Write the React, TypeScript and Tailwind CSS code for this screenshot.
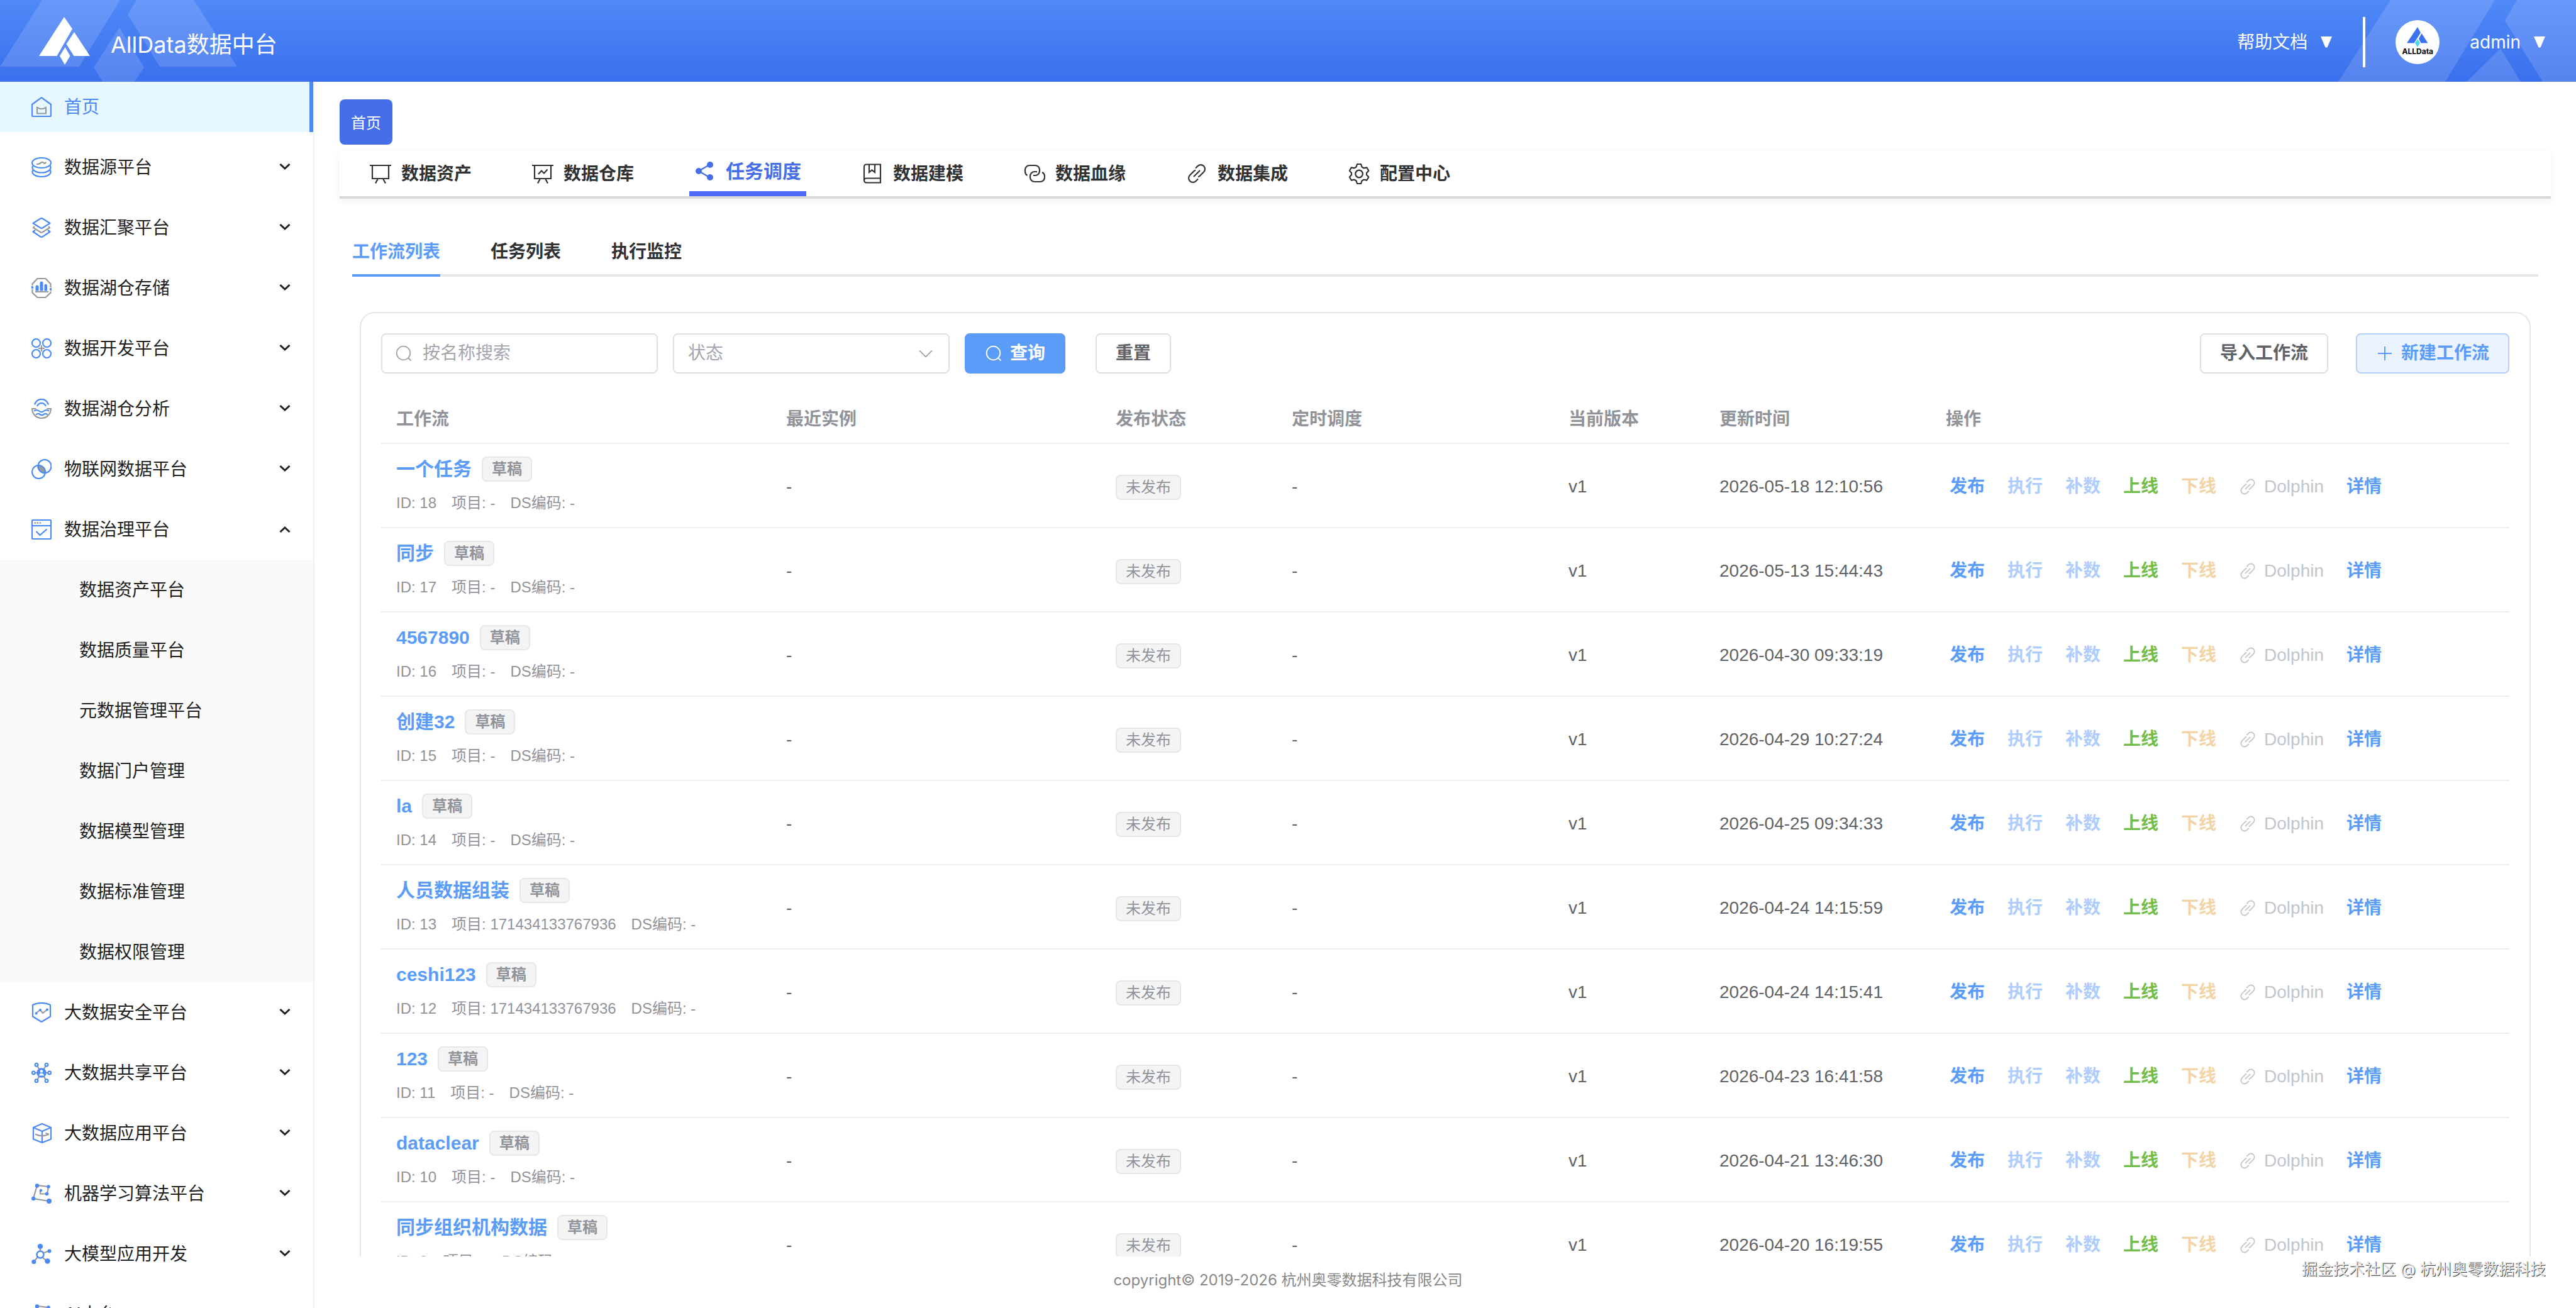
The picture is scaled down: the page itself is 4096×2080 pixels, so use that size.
import type { ReactNode } from "react";

const BLUE = "#4a8af4";
const GRAY = "#999999";

function MenuSvg({ children }: { children: ReactNode }) {
  return (
    <svg viewBox="0 0 32 32" className="h-8 w-8 shrink-0" fill="none" stroke={BLUE} strokeWidth="2.200" aria-hidden="true">
      {children}
    </svg>
  );
}

const HomeIcon = () => (
  <MenuSvg>
    <path d="M16 1.2 31 12v17.3a1.7 1.7 0 0 1-1.7 1.7H2.700A1.700 1.700 0 0 1 1 29.300V12Z" strokeLinejoin="round" />
    <path d="M9 17v9.500h14V17l-4.500 2h-5Z" stroke={GRAY} />
  </MenuSvg>
);

const DatabaseIcon = () => (
  <MenuSvg>
    <ellipse cx="16" cy="9" rx="15" ry="8" />
    <path d="M2.500 13.500C-1 18.500 5 24.500 16 24.500s17-6 13.500-11" />
    <path d="M2.500 20.500C-1 25.500 5 31 16 31s17-5.500 13.500-10.500" />
    <path d="M8 10.500c2.500 1.500 4 .5 6-1s4-2.500 5.500-.5 2.500 0 4-1" stroke={GRAY} />
  </MenuSvg>
);

const LayersIcon = () => (
  <MenuSvg>
    <path d="m5 14-2 2 11.500 7.300q1.500.9 3 0L29 16l-2-2" stroke={GRAY} />
    <path d="M14.500 1.500q1.500-.9 3 0L29.500 9 17.500 16.500q-1.500.9-3 0L2.500 9Z" strokeLinejoin="round" />
    <path d="m6 20-3.500 2.500 12 8q1.500.9 3 0l12-8L26 20" strokeLinejoin="round" />
  </MenuSvg>
);

const StorageIcon = () => (
  <MenuSvg>
    <path d="M1.500 12V9.500L9.500 1h13l8 8.500V15M30.500 21.500v2l-8 7.500h-13l-8-7.500V18" stroke={GRAY} />
    <path d="M6 22h21" stroke={GRAY} />
    <path d="M6.500 20.500V14a2 2 0 0 1 5 0v6.500ZM13.500 20.500V8a2.500 2.500 0 0 1 5 0v12.500ZM20.500 20.500V12a2 2 0 0 1 4.500 0v8.500Z" fill={BLUE} stroke="none" />
    <circle cx="1" cy="15" r="2.200" fill={BLUE} stroke="none" />
    <circle cx="31" cy="18" r="2.200" fill={BLUE} stroke="none" />
  </MenuSvg>
);

const DevIcon = () => (
  <MenuSvg>
    <circle cx="7.500" cy="7.500" r="6.500" />
    <circle cx="24.500" cy="7.500" r="6.500" />
    <circle cx="7.500" cy="24.500" r="6.500" />
    <circle cx="24.500" cy="24.500" r="6.500" />
    <path d="M16 11v10M11 16h10" stroke={GRAY} />
  </MenuSvg>
);

const LakeIcon = () => (
  <MenuSvg>
    <path d="M5 9.500C9-2 23-2 27 9.500" />
    <path d="M9 12C11.500 5.500 20.500 5.500 23 12" />
    <path d="M7.500 16H1c.5 9 7 15 15 15s14.500-6 15-15h-6.500" stroke={GRAY} />
    <path d="M4 19.500c3-2 5.500-2 8 0s5.500 2 8 0 5-2 8 0M7 25.500c2.500-2 4.500-2 6.500-.5s4 1.500 6 0 4-1.500 6 .5" />
  </MenuSvg>
);

const IotIcon = () => (
  <MenuSvg>
    <path d="M10.200 10.500c5-.8 12 5 11.500 11.500-6 .5-11.500-5.500-11.500-11.500Z" fill={GRAY} stroke={GRAY} />
    <circle cx="21" cy="11.500" r="10.500" />
    <circle cx="11.500" cy="20.500" r="10.500" />
  </MenuSvg>
);

const GovernIcon = () => (
  <MenuSvg>
    <rect x="1" y="1" width="30" height="30" rx="1.500" />
    <path d="M1 10h30" />
    <path d="M4.500 5.500h2.500M8.500 5.500H11M12.500 5.500H15" stroke={GRAY} strokeWidth="2.500" />
    <path d="m7.500 19 6 6 11-9.500" />
  </MenuSvg>
);

const ShieldIcon = () => (
  <MenuSvg>
    <path d="M2 4c9-4 19-4 28 0v18.500L16 31 2 22.500Z" strokeLinejoin="round" />
    <path d="m7 17.500 7-5.500 4 5 7-5.500" stroke={GRAY} />
    <circle cx="7.500" cy="17.500" r="2" fill={BLUE} stroke="none" />
    <circle cx="14" cy="12" r="2" fill={BLUE} stroke="none" />
    <circle cx="25" cy="11.500" r="2" fill={BLUE} stroke="none" />
  </MenuSvg>
);

const ShareHubIcon = () => (
  <MenuSvg>
    <path d="m9.500 5.500 3 5M22.500 5.500l-3 5M9.500 26.500l3-5M22.500 26.500l-3-5M6 16h3M23 16h3" stroke={GRAY} />
    <circle cx="16" cy="16" r="7.800" fill={BLUE} stroke="none" />
    <circle cx="16" cy="13.500" r="2.300" fill="white" stroke="none" />
    <path d="M12 20.500c0-5 8-5 8 0Z" fill="white" stroke="none" />
    <circle cx="8" cy="3.300" r="2.400" />
    <circle cx="24" cy="3.300" r="2.400" />
    <circle cx="3.300" cy="16" r="2.400" />
    <circle cx="28.700" cy="16" r="2.400" />
    <circle cx="8" cy="28.700" r="2.400" />
    <circle cx="24" cy="28.700" r="2.400" />
  </MenuSvg>
);

const CubeIcon = () => (
  <MenuSvg>
    <path d="M17 1 31 7v18.500L17 31 3 25.500V7ZM3 7l14 6 14-6M17 13v18" strokeLinejoin="round" />
    <path d="M6 17.500c6 3.500 15 3.500 22 0M22.500 16l5 1.500" stroke={GRAY} />
  </MenuSvg>
);

const MlIcon = () => (
  <MenuSvg>
    <path d="m27 5-18-2L3 24l25 4M27 5l-2 11.500H14V11" stroke={GRAY} />
    <g fill={BLUE} stroke="none">
      <circle cx="9" cy="3.500" r="3.200" />
      <circle cx="27" cy="5" r="2.800" />
      <circle cx="3.200" cy="24" r="3.200" />
      <circle cx="28" cy="28" r="4" />
      <circle cx="24.500" cy="16.500" r="2.800" />
      <circle cx="15" cy="11" r="2.200" />
    </g>
  </MenuSvg>
);

const LlmIcon = () => (
  <MenuSvg>
    <path d="M14 5v7M18 15l10-4M10 21l-6 7M17 21l8 7" stroke={GRAY} />
    <circle cx="14" cy="17" r="5.500" fill="white" strokeWidth="2.500" />
    <g fill={BLUE} stroke="none">
      <circle cx="14" cy="4" r="4.200" />
      <circle cx="28.500" cy="11.500" r="3" />
      <circle cx="3.800" cy="28.500" r="3.500" />
      <circle cx="25.500" cy="27.500" r="4.200" />
    </g>
  </MenuSvg>
);

function Chevron({ up = false }: { up?: boolean }) {
  return (
    <svg viewBox="0 0 18 12" className="h-3 w-[18px]" fill="none" stroke="#1f1f1f" strokeWidth="3" aria-hidden="true">
      <path d={up ? "M1.500 10 9 3l7.500 7" : "m1.500 1 7.500 7 7.500-7"} />
    </svg>
  );
}

const MENU = [
  { label: "数据源平台", icon: <DatabaseIcon /> },
  { label: "数据汇聚平台", icon: <LayersIcon /> },
  { label: "数据湖仓存储", icon: <StorageIcon /> },
  { label: "数据开发平台", icon: <DevIcon /> },
  { label: "数据湖仓分析", icon: <LakeIcon /> },
  { label: "物联网数据平台", icon: <IotIcon /> },
  {
    label: "数据治理平台",
    icon: <GovernIcon />,
    children: [
      "数据资产平台",
      "数据质量平台",
      "元数据管理平台",
      "数据门户管理",
      "数据模型管理",
      "数据标准管理",
      "数据权限管理",
    ],
  },
  { label: "大数据安全平台", icon: <ShieldIcon /> },
  { label: "大数据共享平台", icon: <ShareHubIcon /> },
  { label: "大数据应用平台", icon: <CubeIcon /> },
  { label: "机器学习算法平台", icon: <MlIcon /> },
  { label: "大模型应用开发", icon: <LlmIcon /> },
  { label: "AI中台", icon: <MlIcon /> },
];

function TabSvg({ children }: { children: ReactNode }) {
  return (
    <svg viewBox="0 0 34 34" className="h-[34px] w-[34px] shrink-0" fill="none" stroke="currentColor" strokeWidth="2.200" aria-hidden="true">
      {children}
    </svg>
  );
}

const LINK_PATHS = (
  <>
    <path d="M15 8.500 18.500 5a6.600 6.600 0 0 1 9.500 9.500l-6 6a6.600 6.600 0 0 1-3 1.700" />
    <path d="M19 25.500 15.500 29A6.600 6.600 0 0 1 6 19.500l6-6a6.600 6.600 0 0 1 3-1.700" />
    <path d="m12 22 10-10" />
  </>
);

const TABS = [
  {
    label: "数据资产",
    icon: (
      <TabSvg>
        <path d="M0 4h34M4 4v21h26V4M13 25l-4 7.500M21 25l4 7.500" />
      </TabSvg>
    ),
  },
  {
    label: "数据仓库",
    icon: (
      <TabSvg>
        <path d="M0 4h34M4 4v21h26V4M13 25l-4 7.500M21 25l4 7.500M10 18l5-5.500 4 4 5.500-6" />
      </TabSvg>
    ),
  },
  {
    label: "任务调度",
    active: true,
    icon: (
      <TabSvg>
        <path d="M7 17 25 6.500M7 17l18 10.500" />
        <g fill="currentColor" stroke="none">
          <circle cx="7" cy="17" r="5" />
          <circle cx="25" cy="7" r="5" />
          <circle cx="25" cy="27" r="5" />
        </g>
      </TabSvg>
    ),
  },
  {
    label: "数据建模",
    icon: (
      <TabSvg>
        <path d="M30 24.500H7.500a3.500 3.500 0 0 0 0 7H30v-29H7.500A3.500 3.500 0 0 0 4 6v22M12 2.500v12.500l4.500-3.500 4.500 3.500V2.500" />
      </TabSvg>
    ),
  },
  {
    label: "数据血缘",
    icon: (
      <TabSvg>
        <path d="M5.500 20A7 7 0 0 1 2 14V11a7 7 0 0 1 7-7h9a7 7 0 0 1 7 7v2a7 7 0 0 1-7 7h-3" />
        <path d="M29 15a7 7 0 0 1 4 6v2a7 7 0 0 1-7 7h-9a7 7 0 0 1-7-7v-2a7 7 0 0 1 7-7h4" />
      </TabSvg>
    ),
  },
  { label: "数据集成", icon: <TabSvg>{LINK_PATHS}</TabSvg> },
  {
    label: "配置中心",
    icon: (
      <TabSvg>
        <path
          d="M14 2h6l1.500 4.500 3 1.800 4.700-1 3 5.200-3.200 3.500v3l3.200 3.500-3 5.200-4.700-1-3 1.800L20 33h-6l-1.500-4.500-3-1.800-4.700 1-3-5.200L5 19v-3l-3.200-3.500 3-5.200 4.700 1 3-1.800Z"
          strokeLinejoin="round"
        />
        <circle cx="17" cy="17.500" r="5.800" />
      </TabSvg>
    ),
  },
];

const COLUMNS = [
  { title: "工作流", width: "w-[620px]" },
  { title: "最近实例", width: "w-[524px]" },
  { title: "发布状态", width: "w-[280px]" },
  { title: "定时调度", width: "w-[440px]" },
  { title: "当前版本", width: "w-[240px]" },
  { title: "更新时间", width: "w-[360px]" },
  { title: "操作", width: "w-auto" },
];

const WORKFLOWS = [
  { id: 18, name: "一个任务", project: "-", updated: "2026-05-18 12:10:56" },
  { id: 17, name: "同步", project: "-", updated: "2026-05-13 15:44:43" },
  { id: 16, name: "4567890", project: "-", updated: "2026-04-30 09:33:19" },
  { id: 15, name: "创建32", project: "-", updated: "2026-04-29 10:27:24" },
  { id: 14, name: "la", project: "-", updated: "2026-04-25 09:34:33" },
  { id: 13, name: "人员数据组装", project: "171434133767936", updated: "2026-04-24 14:15:59" },
  { id: 12, name: "ceshi123", project: "171434133767936", updated: "2026-04-24 14:15:41" },
  { id: 11, name: "123", project: "-", updated: "2026-04-23 16:41:58" },
  { id: 10, name: "dataclear", project: "-", updated: "2026-04-21 13:46:30" },
  { id: 9, name: "同步组织机构数据", project: "-", updated: "2026-04-20 16:19:55" },
];

function SearchGlyph() {
  return (
    <svg viewBox="0 0 28 28" className="h-7 w-7 shrink-0" fill="none" stroke="currentColor" strokeWidth="1.800" aria-hidden="true">
      <circle cx="13.500" cy="13.500" r="10.800" />
      <path d="m21 21 4.500 4.500" />
    </svg>
  );
}

function Header() {
  return (
    <header className="relative flex h-[130px] shrink-0 items-center justify-between overflow-hidden bg-linear-to-b from-[#5089f8] to-[#3a70ed] text-white">
      <svg viewBox="0 0 378 130" className="absolute top-0 left-0 h-full w-[378px]" fill="white" fillOpacity="0.14" aria-hidden="true">
        <path d="M67 0h124l-65 106H0ZM217 0h91l69 106H254L203 23ZM190 44l39 63-15 23h-51l-14-23Z" />
      </svg>
      <svg viewBox="0 0 378 130" className="absolute top-0 right-0 h-full w-[378px]" fill="white" fillOpacity="0.14" aria-hidden="true">
        <path d="M83 0h166l-79 130H0ZM284 0h94v130h-53L265 33ZM258 77l32 53h-86Z" />
      </svg>
      <div className="relative flex items-center pl-[62px]">
        <svg viewBox="0 0 82 76" className="h-[76px] w-[82px]" fill="white" role="img" aria-label="AllData">
          <path d="m40 0 13 19-24.500 43H0ZM56 24l25 38H55.500L43.500 43ZM41.500 48l8 14-8.500 14-8-14Z" />
        </svg>
        <span className="mt-3 ml-8 text-[36px] leading-[48px]">AllData数据中台</span>
      </div>
      <div className="relative flex items-center pt-1 pr-12 text-[28px] leading-10">
        <button type="button" className="flex items-center gap-5">
          帮助文档
          <svg viewBox="0 0 20 20" className="h-5 w-5" fill="white" aria-hidden="true">
            <path d="M1 1h18l-7.500 17.500h-3Z" />
          </svg>
        </button>
        <span className="mr-12 ml-12 h-20 w-1 bg-white" />
        <span className="relative h-[70px] w-[70px] rounded-full bg-white">
          <svg viewBox="0 0 70 70" className="h-full w-full" aria-hidden="true">
            <path d="m35 11 5 9-10.500 16.500H18ZM41.500 21l10 15.500h-11L37 29.500Z" fill="#3b72f0" />
            <path d="m35 30 4 6.500-4 6.500-4-6.500Z" fill="#4fd6f5" />
          </svg>
          <span className="absolute inset-x-0 top-[42px] text-center text-[12px] leading-4 font-bold text-black">ALLData</span>
        </span>
        <button type="button" className="ml-12 flex items-center gap-5">
          admin
          <svg viewBox="0 0 20 20" className="h-5 w-5" fill="white" aria-hidden="true">
            <path d="M1 1h18l-7.500 17.500h-3Z" />
          </svg>
        </button>
      </div>
    </header>
  );
}

function Sidebar() {
  return (
    <aside className="w-[500px] shrink-0 overflow-hidden border-r-2 border-[#f0f0f0] text-[28px] leading-10 text-[#1f1f1f]">
      <a href="#home" className="mb-2 flex h-20 items-center gap-5 border-r-[6px] border-[#4a8af4] bg-[#e6f7ff] pl-[50px] text-[#4a8af4]">
        <HomeIcon />
        首页
      </a>
      {MENU.map((item) => (
        <div key={item.label}>
          <button type="button" className="flex h-24 w-full items-center gap-5 pr-9 pl-[50px]">
            {item.icon}
            <span>{item.label}</span>
            <span className="ml-auto">
              <Chevron up={Boolean(item.children)} />
            </span>
          </button>
          {item.children && (
            <ul className="bg-[#fafafa]">
              {item.children.map((child) => (
                <li key={child}>
                  <a href="#sub" className="flex h-24 items-center pl-[126px]">
                    {child}
                  </a>
                </li>
              ))}
            </ul>
          )}
        </div>
      ))}
    </aside>
  );
}

function Toolbar() {
  return (
    <div className="mb-8 flex items-center text-[28px] leading-10">
      <label className="flex h-16 w-[440px] items-center gap-4 rounded-lg border-2 border-[#dfe0e4] px-5 text-[#a3a6ad]">
        <SearchGlyph />
        <input
          type="text"
          aria-label="按名称搜索"
          placeholder="按名称搜索"
          className="min-w-0 flex-1 outline-none placeholder:text-[#a3a6ad]"
        />
      </label>
      <div className="relative ml-6 w-[440px]">
        <select aria-label="状态" className="h-16 w-full appearance-none rounded-lg border-2 border-[#dfe0e4] bg-white px-[22px] text-[#a3a6ad]">
          <option>状态</option>
        </select>
        <svg viewBox="0 0 24 14" className="pointer-events-none absolute top-[26px] right-[26px] h-[14px] w-6" fill="none" stroke="#a3a6ad" strokeWidth="1.800" aria-hidden="true">
          <path d="m2 1.500 10 10 10-10" />
        </svg>
      </div>
      <button type="button" className="ml-6 flex h-16 items-center gap-3 rounded-lg bg-[#5c9cf9] px-8 font-bold text-white">
        <SearchGlyph />
        查询
      </button>
      <button type="button" className="ml-12 h-16 rounded-lg border-2 border-[#dfe0e4] px-[30px] font-bold text-[#606266]">
        重置
      </button>
      <button type="button" className="ml-auto h-16 rounded-lg border-2 border-[#dfe0e4] px-[30px] font-bold text-[#606266]">
        导入工作流
      </button>
      <button type="button" className="ml-11 flex h-16 items-center gap-3 rounded-lg border-2 border-[#b5d1fb] bg-[#ebf3fe] px-[30px] font-bold text-[#5c9cf9]">
        <svg viewBox="0 0 28 28" className="h-7 w-7" fill="none" stroke="currentColor" strokeWidth="2" aria-hidden="true">
          <path d="M14 3v22M3 14h22" />
        </svg>
        新建工作流
      </button>
    </div>
  );
}

function RowActions() {
  return (
    <div className="flex items-center gap-9 pl-1.5 font-bold text-[#5c9cf9]">
      <button type="button">发布</button>
      <button type="button" className="text-[#aecdfc]">执行</button>
      <button type="button" className="text-[#aecdfc]">补数</button>
      <button type="button" className="text-[#74bd48]">上线</button>
      <button type="button" className="text-[#f2d4a6]">下线</button>
      <button type="button" className="flex items-center gap-3 font-normal text-[#c3c5ca]">
        <svg viewBox="0 0 34 34" className="h-7 w-7" fill="none" stroke="currentColor" strokeWidth="2.200" aria-hidden="true">
          {LINK_PATHS}
        </svg>
        Dolphin
      </button>
      <button type="button">详情</button>
    </div>
  );
}

function WorkflowTable() {
  return (
    <table className="w-full table-fixed border-separate border-spacing-0 text-left text-[28px] leading-10 text-[#606266]">
      <thead>
        <tr>
          {COLUMNS.map((col) => (
            <th key={col.title} className={`${col.width} h-20 border-b-2 border-[#ebeef0] px-6 pt-1 font-bold text-[#909399]`}>
              {col.title}
            </th>
          ))}
        </tr>
      </thead>
      <tbody>
        {WORKFLOWS.map((row) => (
          <tr key={row.id}>
            <td className="h-[134px] border-b-2 border-[#ebeef0] px-6">
              <div className="flex items-center gap-4">
                <a href="#detail" className="text-[30px] font-bold text-[#5c9cf9]">
                  {row.name}
                </a>
                <span className="h-10 rounded-lg border-2 border-[#e6e7ea] bg-[#f4f4f5] px-3.5 text-2xl leading-9 font-bold text-[#909399]">草稿</span>
              </div>
              <div className="mt-4 flex gap-6 text-2xl leading-9 text-[#909399]">
                <span>ID: {row.id}</span>
                <span>项目: {row.project}</span>
                <span>DS编码: -</span>
              </div>
            </td>
            <td className="border-b-2 border-[#ebeef0] px-6 pt-1">-</td>
            <td className="border-b-2 border-[#ebeef0] px-6 pt-1">
              <span className="inline-block h-10 rounded-lg border-2 border-[#e6e7ea] bg-[#f4f4f5] px-3.5 align-middle text-2xl leading-9 text-[#909399]">未发布</span>
            </td>
            <td className="border-b-2 border-[#ebeef0] px-6 pt-1">-</td>
            <td className="border-b-2 border-[#ebeef0] px-6 pt-1">v1</td>
            <td className="border-b-2 border-[#ebeef0] px-6 pt-1">{row.updated}</td>
            <td className="border-b-2 border-[#ebeef0] px-6 pt-1">
              <RowActions />
            </td>
          </tr>
        ))}
      </tbody>
    </table>
  );
}

export default function App() {
  return (
    <div className="relative flex h-screen flex-col overflow-hidden bg-white font-['Inter','Noto_Sans_CJK_SC',sans-serif]">
      <Header />
      <div className="flex min-h-0 flex-1">
        <Sidebar />
        <main className="flex min-w-0 flex-1 flex-col px-10 pt-7 pb-[82px]">
          <button type="button" className="h-[72px] self-start rounded-lg bg-[#466ee8] px-[18px] pt-1 text-2xl text-white">
            首页
          </button>
          <nav className="mt-2.5 flex h-[76px] shrink-0 gap-20 border-b-4 border-[#d8d8d8] pl-10 text-[28px] font-bold text-[#303133] shadow-[0_4px_12px_rgba(0,0,0,0.06)]">
            {TABS.map((tab) => (
              <a
                key={tab.label}
                href="#tab"
                className={
                  tab.active
                    ? "flex items-center gap-4 border-b-8 border-[#4c6af5] px-2 text-[30px] text-[#466ee8]"
                    : "flex items-center gap-4 px-2"
                }
              >
                {tab.icon}
                {tab.label}
              </a>
            ))}
          </nav>
          <nav className="mx-5 mt-11 flex h-20 shrink-0 gap-20 border-b-4 border-[#e4e6ea] text-[28px] leading-[80px] font-bold text-[#303133]">
            <a href="#flows" className="h-20 border-b-4 border-[#5c9cf9] text-[#5c9cf9]">工作流列表</a>
            <a href="#tasks">任务列表</a>
            <a href="#monitor">执行监控</a>
          </nav>
          <div className="mx-8 mt-14 min-h-0 flex-1 overflow-hidden font-['Liberation_Sans','Noto_Sans_CJK_SC',sans-serif]">
            <section className="rounded-3xl border-2 border-[#e4e6ea] p-8">
              <Toolbar />
              <WorkflowTable />
            </section>
          </div>
        </main>
      </div>
      <footer className="absolute inset-x-0 bottom-0 h-[82px] pt-5 text-center text-2xl leading-9 text-[#888888]">
        copyright© 2019-2026 杭州奥零数据科技有限公司
      </footer>
      <span className="absolute right-12 bottom-11 text-[25px] leading-9 text-[#e6e6e6] [text-shadow:1px_1px_0_#444]">
        掘金技术社区 @ 杭州奥零数据科技
      </span>
    </div>
  );
}
